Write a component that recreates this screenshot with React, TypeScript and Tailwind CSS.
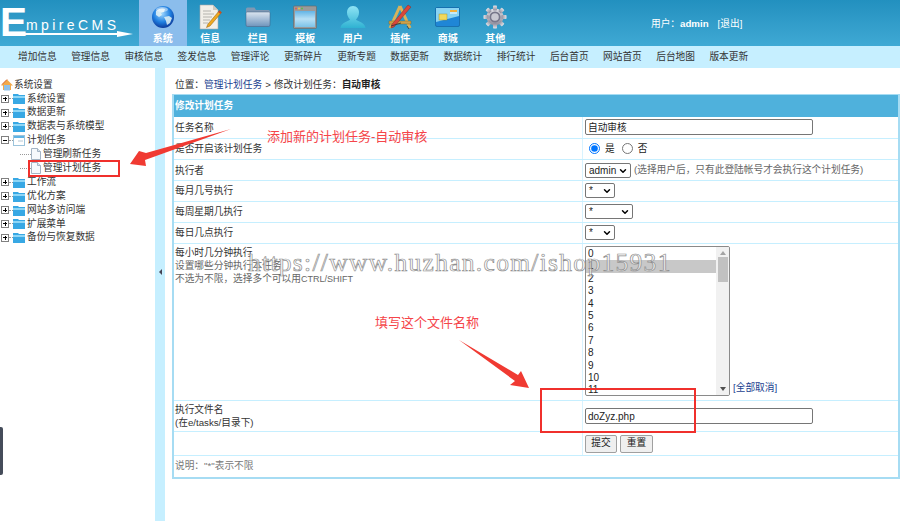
import { ChevronDown } from 'lucide-react'

const font = 'font-["Liberation_Sans","Noto_Sans_CJK_SC",sans-serif]'

function GlobeIcon() {
  return (
    <svg width="24" height="24" viewBox="0 0 24 24">
      <defs>
        <radialGradient id="globe" cx="45%" cy="35%" r="70%">
          <stop offset="0" stopColor="#9fd8ff" />
          <stop offset="0.55" stopColor="#1f7fe0" />
          <stop offset="1" stopColor="#0a2f8f" />
        </radialGradient>
      </defs>
      <circle cx="12" cy="12" r="11" fill="url(#globe)" />
      <path d="M5 6c3-3 7-3 9-2l-1 3-3 1 1 2-3 2-3-2zM13 12l5-1 3 2-2 5-3 2-1-4z" fill="#e4f3f4" opacity=".85" />
      <ellipse cx="11" cy="4.5" rx="6" ry="2.4" fill="#fff" opacity=".45" />
    </svg>
  )
}

function DocIcon() {
  return (
    <svg width="24" height="26" viewBox="0 0 24 26">
      <path d="M2 1h13l5 5v19H2z" fill="#f2efe8" stroke="#aaa" strokeWidth=".6" />
      <path d="M15 1v5h5z" fill="#cfcabf" />
      <path d="M5 7h8M5 10h11M5 13h9M5 16h7M5 19h5" stroke="#a5a5a0" strokeWidth=".8" />
      <path d="M21.500 6.500l2 2L12 22l-3.500 1.500L10 20z" fill="#f0a91e" stroke="#8a5a10" strokeWidth=".5" />
      <path d="M21.500 6.500l2 2-1.300 1.500-2-2z" fill="#c9492f" />
    </svg>
  )
}

function FolderIcon() {
  return (
    <svg width="26" height="24" viewBox="0 0 26 24">
      <defs>
        <linearGradient id="folder" x1="0" y1="0" x2="0" y2="1">
          <stop offset="0" stopColor="#dbe5f0" />
          <stop offset="1" stopColor="#6f94bb" />
        </linearGradient>
      </defs>
      <path d="M1 4q0-1.500 1.500-1.500h7L11 5h12.500Q25 5 25 6.500V20q0 1.500-1.500 1.500h-21Q1 21.500 1 20z" fill="#7f98b3" />
      <path d="M1 8q0-1 1-1h22q1 0 1 1v12q0 1.500-1.500 1.500h-21Q1 21.500 1 20z" fill="url(#folder)" stroke="#3f5f80" strokeWidth=".5" />
    </svg>
  )
}

function WindowIcon() {
  return (
    <svg width="24" height="24" viewBox="0 0 24 24">
      <defs>
        <linearGradient id="win" x1="0" y1="0" x2="0" y2="1">
          <stop offset="0" stopColor="#62b4e6" />
          <stop offset="0.5" stopColor="#b8e0f5" />
          <stop offset="1" stopColor="#7cc3e8" />
        </linearGradient>
      </defs>
      <rect x="0.500" y="1" width="23" height="22.500" rx="1" fill="#9a9a9a" stroke="#666" strokeWidth=".6" />
      <circle cx="3" cy="3.500" r="1" fill="#e8594a" />
      <circle cx="6" cy="3.500" r="1" fill="#e8c54a" />
      <circle cx="9" cy="3.500" r="1" fill="#62b84c" />
      <rect x="2" y="6" width="20" height="16" fill="url(#win)" />
    </svg>
  )
}

function UserIcon() {
  return (
    <svg width="26" height="24" viewBox="0 0 26 24">
      <defs>
        <linearGradient id="user" x1="0" y1="0" x2="0" y2="1">
          <stop offset="0" stopColor="#8fe4f5" />
          <stop offset="1" stopColor="#2fb2d2" />
        </linearGradient>
      </defs>
      <path d="M13 1c4 0 6 3 6 6.500 0 3-1.500 5.500-3 7 1 2 9 2.500 9.500 8.500H.5C1 17 9 16.500 10 14.500c-1.500-1.500-3-4-3-7C7 4 9 1 13 1z" fill="url(#user)" />
    </svg>
  )
}

function ToolsIcon() {
  return (
    <svg width="26" height="26" viewBox="0 0 26 26">
      <path d="M13 2L3 24M13 2l10 22" stroke="#d8b25a" strokeWidth="3" fill="none" />
      <path d="M2 17h22v3H2z" fill="#cda24a" stroke="#7a5a20" strokeWidth=".4" />
      <path d="M21 1l3 2L7 23l-3 1 .8-3.500z" fill="#d9463a" stroke="#7c2018" strokeWidth=".4" />
      <path d="M4 22l10-3M20 22l2 3" stroke="#333" strokeWidth=".8" />
    </svg>
  )
}

function CardIcon() {
  return (
    <svg width="25" height="20" viewBox="0 0 25 20">
      <rect x="0.500" y="0.500" width="24" height="19" rx="1.500" fill="#1f86d6" stroke="#0f5c9c" strokeWidth=".6" />
      <path d="M1 1h23v8L1 15z" fill="#8ad4f2" />
      <rect x="4" y="7" width="8" height="6" fill="#f0d85c" stroke="#9c8a20" strokeWidth=".4" />
      <path d="M15 3h7v2h-7z" fill="#f2b13c" />
      <path d="M15 6h7" stroke="#fff" strokeWidth="1" />
    </svg>
  )
}

function GearIcon() {
  return (
    <svg width="24" height="24" viewBox="0 0 24 24">
      <defs>
        <linearGradient id="gear" x1="0" y1="0" x2="0" y2="1">
          <stop offset="0" stopColor="#e2e2e8" />
          <stop offset="1" stopColor="#8d8d9c" />
        </linearGradient>
      </defs>
      <g fill="url(#gear)">
        <circle cx="12" cy="12" r="8.500" />
        {[0, 45, 90, 135, 180, 225, 270, 315].map((a) => (
          <rect key={a} x="10" y="0.500" width="4" height="5" rx=".8" transform={`rotate(${a} 12 12)`} />
        ))}
      </g>
      <circle cx="12" cy="12" r="5.500" fill="#77778a" />
      <circle cx="12" cy="12" r="3.800" fill="#c9c9d2" />
    </svg>
  )
}

const navItems = [
  { label: '系统', icon: <GlobeIcon />, active: true },
  { label: '信息', icon: <DocIcon /> },
  { label: '栏目', icon: <FolderIcon /> },
  { label: '模板', icon: <WindowIcon /> },
  { label: '用户', icon: <UserIcon /> },
  { label: '插件', icon: <ToolsIcon /> },
  { label: '商城', icon: <CardIcon /> },
  { label: '其他', icon: <GearIcon /> },
]

const subNav = ['增加信息', '管理信息', '审核信息', '签发信息', '管理评论', '更新碎片', '更新专题', '数据更新', '数据统计', '排行统计', '后台首页', '网站首页', '后台地图', '版本更新']

function Logo() {
  return (
    <svg width="139" height="46" viewBox="0 0 139 46">
      <text x="0" y="36" fill="#fff" fontSize="40" fontWeight="bold" fontFamily="Liberation Sans" textLength="27" lengthAdjust="spacingAndGlyphs">E</text>
      <text x="26" y="30" fill="#fff" fontSize="14" fontFamily="Liberation Sans" textLength="90">mpireCMS</text>
      <path d="M24 33h93v-2l16 3-16 3v-2H24z" fill="#fff" />
    </svg>
  )
}

function Expander({ open }: { open?: boolean }) {
  return (
    <span className="flex h-[8px] w-[8px] shrink-0 items-center justify-center border border-[#808080] bg-white">
      <span className="relative block h-px w-[4px] bg-black">
        {!open && <span className="absolute left-[1.5px] top-[-1.5px] block h-[4px] w-px bg-black" />}
      </span>
    </span>
  )
}

function TreeFolder({ open }: { open?: boolean }) {
  return (
    <svg width="12" height="11" viewBox="0 0 12 11" className="shrink-0">
      {open ? (
        <>
          <rect x="0.500" y="0.500" width="11" height="10" fill="#fff" stroke="#9cc4dc" />
          <rect x="1" y="1" width="10" height="2" fill="#5fb4e6" />
          <path d="M5 6h5" stroke="#b5c8d5" />
        </>
      ) : (
        <>
          <path d="M0 1h5l1 1h6v9H0z" fill="#38a8e4" />
          <path d="M0 3h12v2H0z" fill="#8ed6f6" />
        </>
      )}
    </svg>
  )
}

function PageIcon() {
  return (
    <svg width="10" height="12" viewBox="0 0 10 12" className="shrink-0">
      <path d="M.5.5h6l3 3v8H.5z" fill="#f6f9fc" stroke="#a4b4c4" />
      <path d="M6.500.5v3h3" fill="#dbe5ee" stroke="#a4b4c4" />
    </svg>
  )
}

const treeTop = ['系统设置', '数据更新', '数据表与系统模型']
const treeBottom = ['工作流', '优化方案', '网站多访问端', '扩展菜单', '备份与恢复数据']

function TreeRow({ label }: { label: string }) {
  return (
    <div className="flex h-[13.8px] items-center pl-[1px]">
      <Expander />
      <span className="w-[4px] shrink-0 border-t border-dotted border-[#999]" />
      <TreeFolder />
      <span className="ml-[2px] whitespace-nowrap">{label}</span>
    </div>
  )
}

function Sidebar() {
  return (
    <aside className="w-[155px] shrink-0 pt-[10px] text-[9.7px] text-[#333]">
      <div className="flex h-[14px] items-center pl-[1px]">
        <svg width="12" height="12" viewBox="0 0 12 12" className="shrink-0">
          <path d="M6 .5L0 6.500h2V11h8V6.500h2z" fill="#f2a94a" />
          <rect x="3" y="6" width="6" height="5.500" fill="#8fc1ea" />
          <path d="M6 .5L1 5.500" stroke="#d8632c" />
        </svg>
        <span className="ml-[1px]">系统设置</span>
      </div>
      {treeTop.map((t) => (
        <TreeRow key={t} label={t} />
      ))}
      <div className="flex h-[13.8px] items-center pl-[1px]">
        <Expander open />
        <span className="w-[4px] shrink-0 border-t border-dotted border-[#999]" />
        <TreeFolder open />
        <span className="ml-[2px]">计划任务</span>
      </div>
      {['管理刷新任务', '管理计划任务'].map((t) => (
        <div key={t} className="flex h-[14.2px] items-center pl-[20px]">
          <span className="w-[11px] shrink-0 border-t border-dotted border-[#999]" />
          <PageIcon />
          <span className="ml-[2px] whitespace-nowrap">{t}</span>
        </div>
      ))}
      {treeBottom.map((t) => (
        <TreeRow key={t} label={t} />
      ))}
    </aside>
  )
}

function Row({ label, h, children }: { label: React.ReactNode; h: string; children: React.ReactNode }) {
  return (
    <div className={`flex border-b border-[#c6efff] ${h}`}>
      <div className="w-[409px] shrink-0 border-r border-[#d8f3ff] pl-[1px] pr-[2px]">{label}</div>
      <div className="flex flex-1 items-center pl-[2px]">{children}</div>
    </div>
  )
}

function Select({ value, width }: { value: string; width: string }) {
  return (
    <span className={`relative flex h-[15px] items-center rounded-[2px] border border-[#767676] bg-white pl-[3px] text-[10px] text-[#222] ${width}`}>
      {value}
      <ChevronDown size={10} strokeWidth={3.5} className="absolute right-[2px] top-[2px] text-black" />
    </span>
  )
}

function ListBox() {
  const minutes = Array.from({ length: 12 }, (_, i) => i)
  return (
    <div className="flex h-[150px] w-[145px] overflow-hidden rounded-[2px] border border-[#8a8a8a] bg-white">
      <div className="flex-1 pt-[1px] text-[10px] leading-[12.4px] text-[#222]">
        {minutes.map((m) => (
          <div key={m} className={m === 1 ? 'bg-[#c8c8c8] pl-[2px]' : 'pl-[2px]'}>
            {m}
          </div>
        ))}
      </div>
      <div className="flex w-[13px] flex-col items-center bg-[#f1f1f1]">
        <span className="mt-[4px] h-0 w-0 border-x-[3px] border-b-[4px] border-x-transparent border-b-[#a3a3a3]" />
        <span className="mt-[2px] h-[25px] w-[10px] bg-[#c1c1c1]" />
        <span className="mb-[4px] mt-auto h-0 w-0 border-x-[3px] border-t-[4px] border-x-transparent border-t-[#505050]" />
      </div>
    </div>
  )
}

function MainTable() {
  return (
    <div className="border-x-2 border-b-2 border-t border-[#a6dcf3] text-[9.7px] text-[#333]">
      <div className="flex h-[22px] items-center bg-[#4fb1dc] px-[1px] pt-[1px] font-bold text-white">修改计划任务</div>
      <Row h="h-[22px]" label={<div className="pt-[4px]">任务名称</div>}>
        <input readOnly value="自动审核" className="mt-[-2px] h-[16px] w-[228px] rounded-[2px] border border-[#767676] bg-white px-[2px] text-[9.7px] text-[#222]" />
      </Row>
      <Row h="h-[21px]" label={<div className="pt-[3px]">是否开启该计划任务</div>}>
        <label className="flex items-center pl-[4px] text-[#222]">
          <input type="radio" name="open" defaultChecked className="m-0 h-[11px] w-[11px]" />
          <span className="ml-[5px]">是</span>
          <input type="radio" name="open" className="m-0 ml-[7px] h-[11px] w-[11px]" />
          <span className="ml-[5px]">否</span>
        </label>
      </Row>
      <Row h="h-[21px]" label={<div className="pt-[4px]">执行者</div>}>
        <Select value="admin" width="w-[46px]" />
        <span className="ml-[3px] whitespace-nowrap text-[#666]">(选择用户后，只有此登陆帐号才会执行这个计划任务)</span>
      </Row>
      <Row h="h-[21px]" label={<div className="pt-[3px]">每月几号执行</div>}>
        <div className="mt-[-2px]">
          <Select value="*" width="w-[30px]" />
        </div>
      </Row>
      <Row h="h-[21px]" label={<div className="pt-[3px]">每周星期几执行</div>}>
        <div className="mt-[-2px]">
          <Select value="*" width="w-[48px]" />
        </div>
      </Row>
      <Row h="h-[21px]" label={<div className="pt-[3px]">每日几点执行</div>}>
        <div className="mt-[-2px]">
          <Select value="*" width="w-[30px]" />
        </div>
      </Row>
      <Row
        h="h-[157px]"
        label={
          <div className="pt-[2px] leading-[13px]">
            每小时几分钟执行
            <div className="text-[#666]">设置哪些分钟执行本任务</div>
            <div className="text-[#666]">
              不选为不限，选择多个可以用<span className="text-[9px]">CTRL/SHIFT</span>
            </div>
          </div>
        }
      >
        <div className="mt-[-2px] flex items-end">
          <ListBox />
          <a className="ml-[3px] text-[#1a3f8f]">[全部取消]</a>
        </div>
      </Row>
      <Row
        h="h-[31px]"
        label={
          <div className="pt-[2px] leading-[13px]">
            执行文件名
            <br />
            (在e/tasks/目录下)
          </div>
        }
      >
        <input readOnly value="doZyz.php" className="h-[16px] w-[228px] rounded-[2px] border border-[#767676] bg-white px-[2px] text-[10px] text-[#222]" />
      </Row>
      <Row h="h-[24px]" label={null}>
        <button className="h-[18px] w-[32px] rounded-[2px] border border-[#a0a0a0] bg-[#efefef] text-[9.7px] text-[#222]">提交</button>
        <button className="ml-[3px] h-[18px] w-[33px] rounded-[2px] border border-[#a0a0a0] bg-[#efefef] text-[9.7px] text-[#222]">重置</button>
      </Row>
      <div className="flex h-[21px] items-center px-[1px] text-[#777]">说明："*"表示不限</div>
    </div>
  )
}

function Annotations() {
  return (
    <>
      <div className="absolute left-[248px] top-[244px] whitespace-nowrap font-['Liberation_Serif',serif] text-[25.500px] tracking-[1.3px] text-white/60 [-webkit-text-stroke:0.7px_#8e8e8e]">
        https://www.huzhan.com/ishop15931
      </div>
      <svg width="900" height="521" viewBox="0 0 900 521" className="pointer-events-none absolute left-0 top-0">
        <path d="M231 129L146 153l-7-2-9 13 16 2-1-6z" fill="#f03a32" />
        <path d="M459 340L518 375l3-4 8 17-19-3 5-4z" fill="#f03a32" />
      </svg>
      <div className="absolute left-[28px] top-[160px] h-[17px] w-[92px] border-2 border-[#f0302c]" />
      <div className="absolute left-[540px] top-[388px] h-[45px] w-[156px] border-2 border-[#f0302c]" />
      <div className="absolute left-[267px] top-[127px] whitespace-nowrap text-[13px] text-[#f5454a]">添加新的计划任务-自动审核</div>
      <div className="absolute left-[375px] top-[313px] whitespace-nowrap text-[13px] text-[#f5454a]">填写这个文件名称</div>
      <div className="absolute left-0 top-[427px] h-[48px] w-[3px] rounded-r-[2px] bg-[#454c5a]" />
    </>
  )
}

export default function App() {
  return (
    <div className={`relative flex h-[521px] w-[900px] flex-col overflow-hidden bg-white ${font}`}>
      <header className="flex h-[46px] shrink-0 bg-gradient-to-b from-[#2290bf] to-[#3fa9d4]">
        <div className="w-[139px] shrink-0">
          <Logo />
        </div>
        <nav className="flex">
          {navItems.map((n) => (
            <div key={n.label} className={`flex w-[47.500px] flex-col items-center text-[10px] font-bold text-white ${n.active ? 'bg-[#8bbdec]' : ''}`}>
              <div className="flex h-[31px] items-center pt-[2px]">{n.icon}</div>
              <span>{n.label}</span>
            </div>
          ))}
        </nav>
        <div className="ml-[132px] pt-[17px] text-[9.7px] text-white">
          用户：<b>admin</b>
          <span className="ml-[9px]">[退出]</span>
        </div>
      </header>
      <div className="flex h-[22px] shrink-0 items-center bg-[#c6efff] pl-[18px] text-[9.7px] text-[#333]">
        {subNav.map((s) => (
          <span key={s} className="w-[53.200px] shrink-0 whitespace-nowrap">
            {s}
          </span>
        ))}
      </div>
      <div className="flex flex-1">
        <Sidebar />
        <div className="flex w-[10px] shrink-0 items-center justify-center bg-[#c6efff]">
          <span className="mt-[-45px] h-0 w-0 border-y-[3px] border-r-[3px] border-y-transparent border-r-[#445]" />
        </div>
        <main className="min-w-0 flex-1 pl-[7px] pt-[11px]">
          <div className="mb-[3px] h-[12px] whitespace-nowrap pl-[3px] text-[9.7px] leading-[12px] text-[#333]">
            位置：<a className="text-[#1a3f8f]">管理计划任务</a>
            <span className="mx-[3px]">&gt;</span>修改计划任务：<b className="text-[#222]">自动审核</b>
          </div>
          <MainTable />
        </main>
      </div>
      <Annotations />
    </div>
  )
}
